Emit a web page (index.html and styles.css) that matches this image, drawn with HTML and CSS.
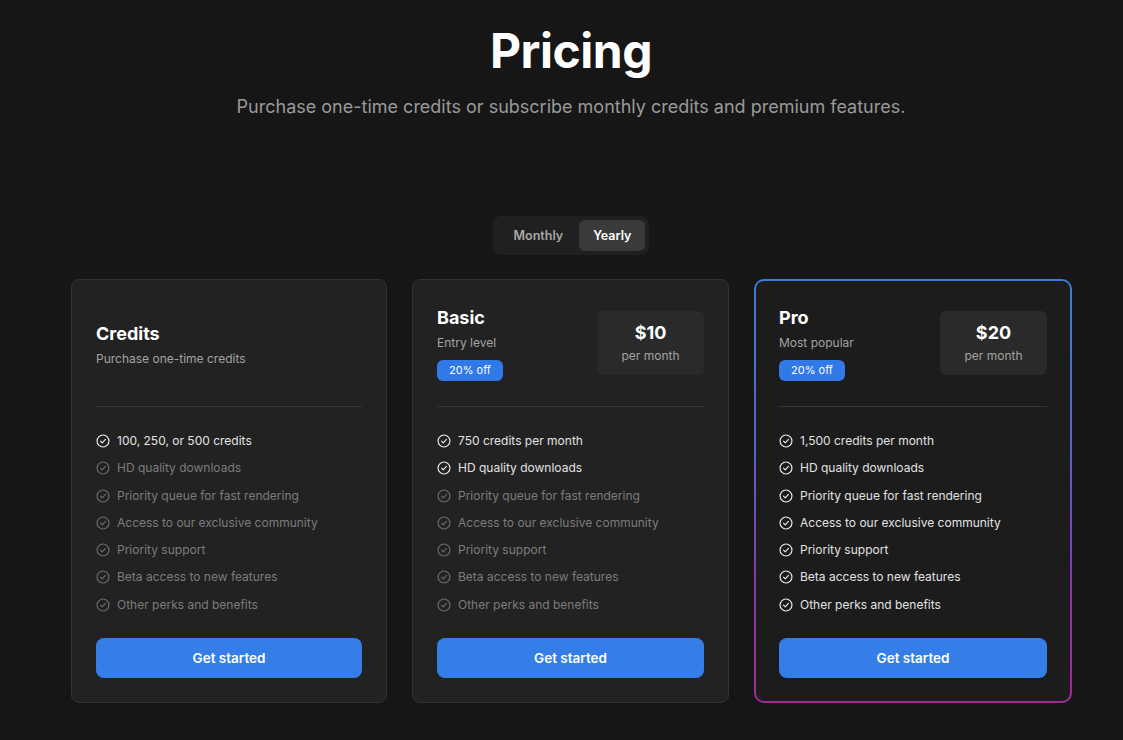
FILE: index.html
```html
<!DOCTYPE html>
<html lang="en">
<head>
<meta charset="utf-8">
<title>Pricing</title>
<link rel="stylesheet" href="styles.css">
</head>
<body>
<main class="page">
  <header class="hero">
    <h1 class="title">Pricing</h1>
    <p class="subtitle">Purchase one-time credits or subscribe monthly credits and premium features.</p>
  </header>

  <div class="toggle-wrap">
    <div class="toggle">
      <button class="toggle-btn">Monthly</button>
      <button class="toggle-btn active">Yearly</button>
    </div>
  </div>

  <section class="cards">
    <article class="card">
      <div class="card-head head-center">
        <div class="plan">
          <h2 class="plan-name">Credits</h2>
          <p class="plan-desc">Purchase one-time credits</p>
        </div>
      </div>
      <hr class="divider">
      <ul class="features">
        <li class="on"><svg viewBox="0 0 16 16"><circle cx="8" cy="8" r="6.8"/><path d="M5.2 8.2l1.9 1.9 3.7-3.9"/></svg>100, 250, or 500 credits</li>
        <li><svg viewBox="0 0 16 16"><circle cx="8" cy="8" r="6.8"/><path d="M5.2 8.2l1.9 1.9 3.7-3.9"/></svg>HD quality downloads</li>
        <li><svg viewBox="0 0 16 16"><circle cx="8" cy="8" r="6.8"/><path d="M5.2 8.2l1.9 1.9 3.7-3.9"/></svg>Priority queue for fast rendering</li>
        <li><svg viewBox="0 0 16 16"><circle cx="8" cy="8" r="6.8"/><path d="M5.2 8.2l1.9 1.9 3.7-3.9"/></svg>Access to our exclusive community</li>
        <li><svg viewBox="0 0 16 16"><circle cx="8" cy="8" r="6.8"/><path d="M5.2 8.2l1.9 1.9 3.7-3.9"/></svg>Priority support</li>
        <li><svg viewBox="0 0 16 16"><circle cx="8" cy="8" r="6.8"/><path d="M5.2 8.2l1.9 1.9 3.7-3.9"/></svg>Beta access to new features</li>
        <li><svg viewBox="0 0 16 16"><circle cx="8" cy="8" r="6.8"/><path d="M5.2 8.2l1.9 1.9 3.7-3.9"/></svg>Other perks and benefits</li>
      </ul>
      <button class="cta">Get started</button>
    </article>

    <article class="card">
      <div class="card-head">
        <div class="plan">
          <h2 class="plan-name">Basic</h2>
          <p class="plan-desc">Entry level</p>
          <span class="badge">20% off</span>
        </div>
        <div class="price">
          <div class="amount">$10</div>
          <div class="period">per month</div>
        </div>
      </div>
      <hr class="divider">
      <ul class="features">
        <li class="on"><svg viewBox="0 0 16 16"><circle cx="8" cy="8" r="6.8"/><path d="M5.2 8.2l1.9 1.9 3.7-3.9"/></svg>750 credits per month</li>
        <li class="on"><svg viewBox="0 0 16 16"><circle cx="8" cy="8" r="6.8"/><path d="M5.2 8.2l1.9 1.9 3.7-3.9"/></svg>HD quality downloads</li>
        <li><svg viewBox="0 0 16 16"><circle cx="8" cy="8" r="6.8"/><path d="M5.2 8.2l1.9 1.9 3.7-3.9"/></svg>Priority queue for fast rendering</li>
        <li><svg viewBox="0 0 16 16"><circle cx="8" cy="8" r="6.8"/><path d="M5.2 8.2l1.9 1.9 3.7-3.9"/></svg>Access to our exclusive community</li>
        <li><svg viewBox="0 0 16 16"><circle cx="8" cy="8" r="6.8"/><path d="M5.2 8.2l1.9 1.9 3.7-3.9"/></svg>Priority support</li>
        <li><svg viewBox="0 0 16 16"><circle cx="8" cy="8" r="6.8"/><path d="M5.2 8.2l1.9 1.9 3.7-3.9"/></svg>Beta access to new features</li>
        <li><svg viewBox="0 0 16 16"><circle cx="8" cy="8" r="6.8"/><path d="M5.2 8.2l1.9 1.9 3.7-3.9"/></svg>Other perks and benefits</li>
      </ul>
      <button class="cta">Get started</button>
    </article>

    <article class="card card-pro">
      <div class="card-head">
        <div class="plan">
          <h2 class="plan-name">Pro</h2>
          <p class="plan-desc">Most popular</p>
          <span class="badge">20% off</span>
        </div>
        <div class="price">
          <div class="amount">$20</div>
          <div class="period">per month</div>
        </div>
      </div>
      <hr class="divider">
      <ul class="features">
        <li class="on"><svg viewBox="0 0 16 16"><circle cx="8" cy="8" r="6.8"/><path d="M5.2 8.2l1.9 1.9 3.7-3.9"/></svg>1,500 credits per month</li>
        <li class="on"><svg viewBox="0 0 16 16"><circle cx="8" cy="8" r="6.8"/><path d="M5.2 8.2l1.9 1.9 3.7-3.9"/></svg>HD quality downloads</li>
        <li class="on"><svg viewBox="0 0 16 16"><circle cx="8" cy="8" r="6.8"/><path d="M5.2 8.2l1.9 1.9 3.7-3.9"/></svg>Priority queue for fast rendering</li>
        <li class="on"><svg viewBox="0 0 16 16"><circle cx="8" cy="8" r="6.8"/><path d="M5.2 8.2l1.9 1.9 3.7-3.9"/></svg>Access to our exclusive community</li>
        <li class="on"><svg viewBox="0 0 16 16"><circle cx="8" cy="8" r="6.8"/><path d="M5.2 8.2l1.9 1.9 3.7-3.9"/></svg>Priority support</li>
        <li class="on"><svg viewBox="0 0 16 16"><circle cx="8" cy="8" r="6.8"/><path d="M5.2 8.2l1.9 1.9 3.7-3.9"/></svg>Beta access to new features</li>
        <li class="on"><svg viewBox="0 0 16 16"><circle cx="8" cy="8" r="6.8"/><path d="M5.2 8.2l1.9 1.9 3.7-3.9"/></svg>Other perks and benefits</li>
      </ul>
      <button class="cta">Get started</button>
    </article>
  </section>
</main>
</body>
</html>
```

FILE: styles.css
```css
* { box-sizing: border-box; }

html, body {
  margin: 0;
  padding: 0;
  background: #161616;
}

body {
  font-family: Inter, "Noto Sans", "Liberation Sans", sans-serif;
  color: #fff;
  padding-left: 19px;
}

.page {
  width: 1000px;
  margin: 0 auto;
  padding-top: 22px;
}

.hero {
  text-align: center;
}

.title {
  margin: 0;
  font-size: 48px;
  line-height: 58px;
  font-weight: 700;
  letter-spacing: -0.5px;
  color: #fff;
}

.subtitle {
  margin: 15px 0 0;
  font-size: 18px;
  line-height: 24px;
  color: #9a9a9a;
  font-weight: 400;
}

.toggle-wrap {
  display: flex;
  justify-content: center;
  margin-top: 97px;
}

.toggle {
  display: flex;
  padding: 4px;
  background: #202020;
  border-radius: 8px;
}

.toggle-btn {
  font-family: inherit;
  font-size: 12.5px;
  font-weight: 600;
  color: #a8a8a8;
  background: transparent;
  border: 0;
  border-radius: 6px;
  height: 31px;
  padding: 0 16px 0 17px;
}

.toggle-btn.active {
  background: #3a3a3a;
  color: #fff;
  padding: 0 14px;
}

.cards {
  display: grid;
  grid-template-columns: 316px 317px 318px;
  gap: 0 25px;
  margin-top: 24px;
}

.card {
  background: #222222;
  border: 1px solid #323232;
  border-radius: 8px;
  padding: 23px 24px 24px;
  display: flex;
  flex-direction: column;
  height: 424px;
}

.card-pro {
  border: 2px solid transparent;
  border-radius: 10px;
  background:
    linear-gradient(#1c1c1c, #1c1c1c) padding-box,
    linear-gradient(to bottom, #3a7ddb 0%, #5a60cf 40%, #8a35a8 75%, #a02a95 100%) border-box;
  padding: 22px 23px 23px;
}

.card-head {
  display: flex;
  justify-content: space-between;
  align-items: flex-start;
  height: 80px;
  padding-top: 2px;
}

.head-center {
  align-items: center;
  padding-top: 4px;
  padding-bottom: 0;
}

.plan-name {
  margin: 0;
  font-size: 18px;
  line-height: 25px;
  font-weight: 700;
  color: #fff;
}

.plan-desc {
  margin: 0;
  font-size: 12px;
  line-height: 20px;
  color: #a3a3a3;
  margin-top: 3px;
}

.badge {
  display: inline-block;
  margin-top: 7px;
  background: #3079e6;
  color: #fff;
  font-size: 11px;
  line-height: 21px;
  height: 21px;
  padding: 0 12px;
  border-radius: 6px;
}

.price {
  width: 107px;
  height: 64px;
  background: #2a2a2a;
  border-radius: 6px;
  margin-top: 6px;
  display: flex;
  flex-direction: column;
  align-items: center;
  justify-content: center;
}

.amount {
  font-size: 18px;
  line-height: 24px;
  font-weight: 700;
  color: #fff;
}

.period {
  font-size: 12px;
  line-height: 18px;
  color: #a3a3a3;
  margin-top: 2px;
}

.divider {
  border: 0;
  border-top: 1px solid #363636;
  margin: 23px 0 0;
  height: 0;
}

.features {
  list-style: none;
  margin: 24px 0 0;
  padding: 0;
  display: flex;
  flex-direction: column;
  gap: 7.3px;
}

.features li {
  display: flex;
  align-items: center;
  gap: 7px;
  font-size: 12px;
  line-height: 20px;
  color: #7c7c7c;
}

.features li.on {
  color: #e2e2e2;
}

.features svg {
  width: 14px;
  height: 14px;
  flex: none;
  fill: none;
  stroke: #6c6c6c;
  stroke-width: 1.3;
  stroke-linecap: round;
  stroke-linejoin: round;
}

.features li.on svg {
  stroke: #eeeeee;
}

.cta {
  margin-top: auto;
  height: 40px;
  width: 100%;
  border: 0;
  border-radius: 8px;
  background: #357ee8;
  color: #fff;
  font-family: inherit;
  font-size: 13.5px;
  font-weight: 600;
}
```
